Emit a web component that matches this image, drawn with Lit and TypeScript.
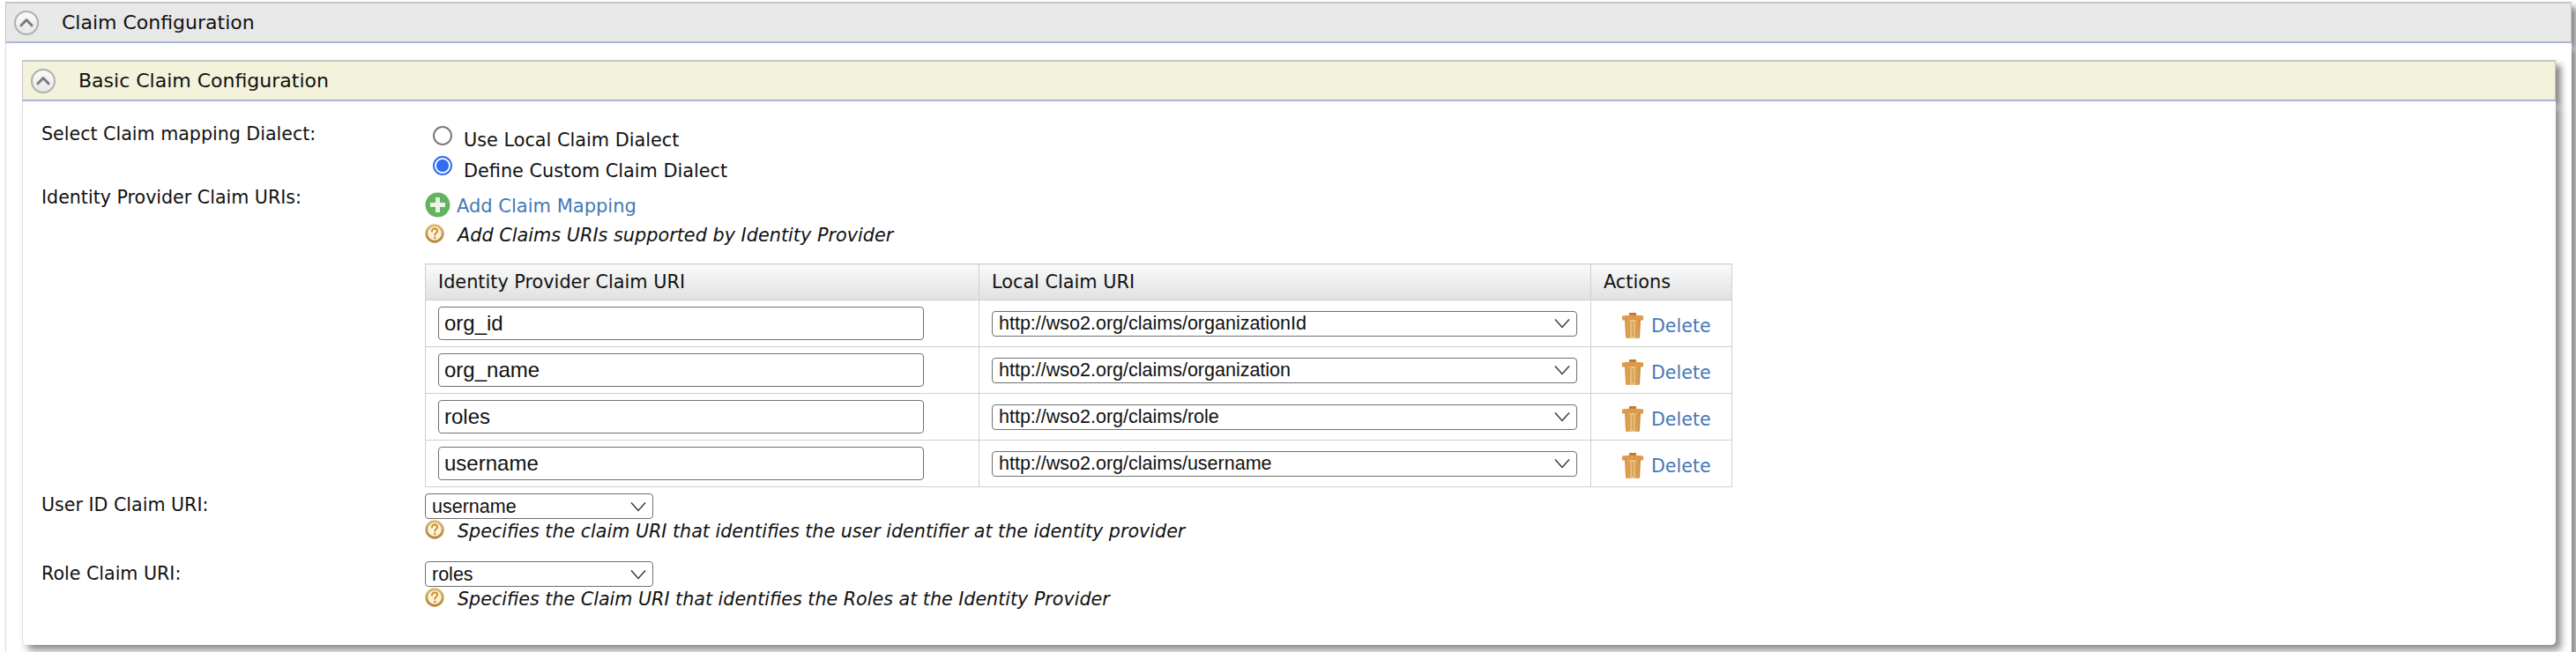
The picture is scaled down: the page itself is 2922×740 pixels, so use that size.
import { LitElement, html, css } from "lit";
import { customElement } from "lit/decorators.js";

const chevron = (size: number) => html`<svg class="chev" width=${size} height=${size} viewBox="0 0 28 28" aria-hidden="true">
  <defs><linearGradient id="cg" x1="0" y1="0" x2="0" y2="1"><stop offset="0" stop-color="#fbfbfb"/><stop offset="1" stop-color="#e6e6e6"/></linearGradient></defs>
  <circle cx="14" cy="14" r="13" fill="url(#cg)" stroke="#b0b0b0" stroke-width="2"/>
  <path d="M8 16.800 14 10.600l6 6.200" fill="none" stroke="#7c7c7c" stroke-width="3" stroke-linecap="round" stroke-linejoin="round"/>
</svg>`;

const helpIcon = html`<svg class="help-icon" width="22" height="22" viewBox="0 0 22 22" aria-hidden="true">
  <defs><linearGradient id="hg" x1="0" y1="0" x2="0" y2="1"><stop offset="0" stop-color="#dcbb70"/><stop offset="1" stop-color="#b5863a"/></linearGradient></defs>
  <circle cx="11" cy="11" r="9.2" fill="#fdf3dc" stroke="url(#hg)" stroke-width="3"/>
  <path d="M7.900 8.600c.2-2 1.500-3 3.200-3 1.800 0 3 1.100 3 2.600 0 2.300-2.900 2.400-2.900 4.600" fill="none" stroke="#d98a2a" stroke-width="2" stroke-linecap="round"/>
  <circle cx="11.200" cy="16" r="1.300" fill="#d98a2a"/>
</svg>`;

const plusIcon = html`<svg class="plus-icon" width="29" height="29" viewBox="0 0 29 29" aria-hidden="true">
  <circle cx="14.500" cy="14.500" r="14" fill="#66b35f"/>
  <path d="M12 6h5v6h6v5h-6v6h-5v-6H6v-5h6z" fill="#e9f5e6"/>
</svg>`;

const trashIcon = html`<svg class="trash" width="24" height="29" viewBox="0 0 24 29" aria-hidden="true">
  <defs><linearGradient id="tg" x1="0" y1="0" x2="1" y2="0"><stop offset="0" stop-color="#d68b38"/><stop offset=".5" stop-color="#eec98a"/><stop offset="1" stop-color="#cc8434"/></linearGradient></defs>
  <path d="M8 0h8v3.500H8z" fill="#c27a2a"/>
  <path d="M0 3.500C4 2.500 20 2.500 24 3.500V8.500H0z" fill="#dd9a4c"/>
  <path d="M3 8h18l-1 19.500q-.1 1.500-2 1.500H6q-1.900 0-2-1.500z" fill="url(#tg)"/>
  <path d="M8 10v17M12 10v17M16 10v17" stroke="#cf9a4e" stroke-width="1.500"/>
</svg>`;

const ROWS = [
  { idp: "org_id", local: "http://wso2.org/claims/organizationId" },
  { idp: "org_name", local: "http://wso2.org/claims/organization" },
  { idp: "roles", local: "http://wso2.org/claims/role" },
  { idp: "username", local: "http://wso2.org/claims/username" },
];

const renderOptions = (current: string, options: string[]) =>
  options.map((o) => html`<option ?selected=${o === current}>${o}</option>`);

@customElement("app-root")
export class AppRoot extends LitElement {
  static styles = css`
    :host {
      display: block;
      width: 2922px;
      height: 740px;
      overflow: hidden;
      background: #fff;
      font-family: "DejaVu Sans", sans-serif;
      font-size: 20.8px;
      color: #111;
      padding-top: 2px;
      box-sizing: border-box;
    }
    .outer { margin-left: 6px; width: 2911px; }
    .bar {
      display: flex;
      align-items: center;
      box-sizing: border-box;
      border: 1px solid #c6c6c6;
      border-top-width: 2px;
      border-bottom: 2px solid #a9b8d9;
      box-shadow: 6px 6px 7px #8a8a8a;
      white-space: nowrap;
    }
    .bar-outer { height: 47px; background: #e8e8e8; padding-left: 9px; gap: 26px; }
    .bar-inner { height: 47px; background: #f3f3dc; padding-left: 9px; gap: 26px; }
    .bar-title { font-size: 22px; line-height: 30px; }
    .chev { flex: none; display: block; }
    .outer-body {
      position: relative;
      background: #fff;
      border-left: 1px solid #dedede;
      box-shadow: 6px 6px 7px #8a8a8a;
      padding: 19px 18px 60px 18px;
    }
    .inner-body {
      position: relative;
      background: #fff;
      border-left: 1px solid #dedede;
      border-radius: 0 0 5px 5px;
      box-shadow: 6px 6px 8px #8a8a8a;
      padding: 20px 0 37px 21px;
      display: grid;
      grid-template-columns: 435px 1fr;
    }
    .label { font-size: 20.6px; line-height: 30px; white-space: nowrap; }
    .label-top { padding-top: 2px; }
    .label-user { margin-top: 5px; }
    .value { min-width: 0; }
    .v-radio { padding-top: 8px; }
    .v-add { padding-top: 11px; }
    .v-user { padding-top: 7px; padding-bottom: 18px; }
    .v-role { padding-top: 1px; }
    .radio-line { display: flex; align-items: flex-start; height: 34px; gap: 13px; margin-left: 9px; }
    .radio-line:last-child { height: 30px; }
    .radio-line input {
      appearance: none;
      -webkit-appearance: none;
      box-sizing: border-box;
      width: 22px;
      height: 22px;
      margin: 0;
      border: 2px solid #7a7a7a;
      border-radius: 50%;
      background: #fff;
      flex: none;
    }
    .radio-line input:checked {
      border-color: #2f6df2;
      background: radial-gradient(circle, #2f6df2 0 6.5px, #fff 7.5px);
    }
    .radio-line span { line-height: 32px; white-space: nowrap; }
    .radio-line:last-child span { line-height: 34px; }
    .add-line { display: flex; align-items: center; gap: 7px; height: 29px; margin-bottom: 5px; font-size: 21px; }
    .add-line .link { position: relative; top: 1px; }
    .link { color: #4678b8; text-decoration: none; white-space: nowrap; }
    .help { display: flex; align-items: flex-start; gap: 15px; height: 30px; font-style: italic; line-height: 30px; white-space: nowrap; }
    .help-icon { flex: none; margin-top: 2px; display: block; }
    .help-tight { margin-top: -1px; font-size: 20.65px; }
    table {
      border-collapse: collapse;
      table-layout: fixed;
      width: 1482px;
      margin-top: 17px;
    }
    th, td { border: 1px solid #cfcfcf; padding: 0; box-sizing: border-box; }
    th {
      height: 41px;
      font-weight: normal;
      text-align: left;
      padding-left: 14px;
      background: linear-gradient(#fafafa, #dfe1e2);
    }
    td { height: 53px; }
    .c1 { width: 628px; }
    .c2 { width: 694px; }
    .c3 { width: 160px; }
    .cell-in { display: flex; align-items: center; padding-left: 14px; }
    input.text {
      width: 551px;
      height: 38px;
      box-sizing: border-box;
      border: 1px solid #707070;
      border-radius: 4px;
      padding: 0 6px;
      font: 24px "Liberation Sans", Arial, sans-serif;
      color: #111;
      background: #fff;
      outline: none;
    }
    select {
      appearance: none;
      -webkit-appearance: none;
      box-sizing: border-box;
      height: 29px;
      border: 1px solid #707070;
      border-radius: 4px;
      padding: 0 30px 0 7px;
      font: 21.5px "Liberation Sans", Arial, sans-serif;
      color: #111;
      background: #fff url("data:image/svg+xml;utf8,<svg xmlns='http://www.w3.org/2000/svg' width='18' height='12' viewBox='0 0 18 12'><path d='M1 1.5l8 9 8-9' fill='none' stroke='%23333' stroke-width='1.4'/></svg>") no-repeat right 7px center;
      display: block;
      outline: none;
    }
    .sel-wide { width: 664px; }
    .sel-small { width: 259px; }
    .del { display: flex; align-items: center; gap: 9px; padding-left: 35px; }
    .trash { display: block; flex: none; margin-top: 4px; }
    .del .link { font-size: 20.6px; position: relative; top: 3px; }
  `;

  render() {
    const names = ROWS.map((r) => r.idp);
    const locals = ROWS.map((r) => r.local);
    return html`
      <div class="outer">
        <div class="bar bar-outer">${chevron(28)}<span class="bar-title">Claim Configuration</span></div>
        <div class="outer-body">
          <div class="bar bar-inner">${chevron(28)}<span class="bar-title">Basic Claim Configuration</span></div>
          <div class="inner-body">
            <div class="label label-top">Select Claim mapping Dialect:</div>
            <div class="value v-radio">
              <label class="radio-line"><input type="radio" name="dialect" /><span>Use Local Claim Dialect</span></label>
              <label class="radio-line"><input type="radio" name="dialect" checked /><span>Define Custom Claim Dialect</span></label>
            </div>

            <div class="label label-top">Identity Provider Claim URIs:</div>
            <div class="value v-add">
              <div class="add-line">${plusIcon}<a class="link">Add Claim Mapping</a></div>
              <div class="help">${helpIcon}<span>Add Claims URIs supported by Identity Provider</span></div>
              <table>
                <thead>
                  <tr>
                    <th class="c1">Identity Provider Claim URI</th>
                    <th class="c2">Local Claim URI</th>
                    <th class="c3">Actions</th>
                  </tr>
                </thead>
                <tbody>
                  ${ROWS.map(
                    (r) => html`<tr>
                      <td><div class="cell-in"><input class="text" .value=${r.idp} /></div></td>
                      <td><div class="cell-in"><select class="sel-wide">${renderOptions(r.local, locals)}</select></div></td>
                      <td><div class="del">${trashIcon}<a class="link">Delete</a></div></td>
                    </tr>`
                  )}
                </tbody>
              </table>
            </div>

            <div class="label label-user">User ID Claim URI:</div>
            <div class="value v-user">
              <select class="sel-small">${renderOptions("username", names)}</select>
              <div class="help help-tight">${helpIcon}<span>Specifies the claim URI that identifies the user identifier at the identity provider</span></div>
            </div>

            <div class="label">Role Claim URI:</div>
            <div class="value v-role">
              <select class="sel-small">${renderOptions("roles", names)}</select>
              <div class="help help-tight">${helpIcon}<span>Specifies the Claim URI that identifies the Roles at the Identity Provider</span></div>
            </div>
          </div>
        </div>
      </div>
    `;
  }
}
